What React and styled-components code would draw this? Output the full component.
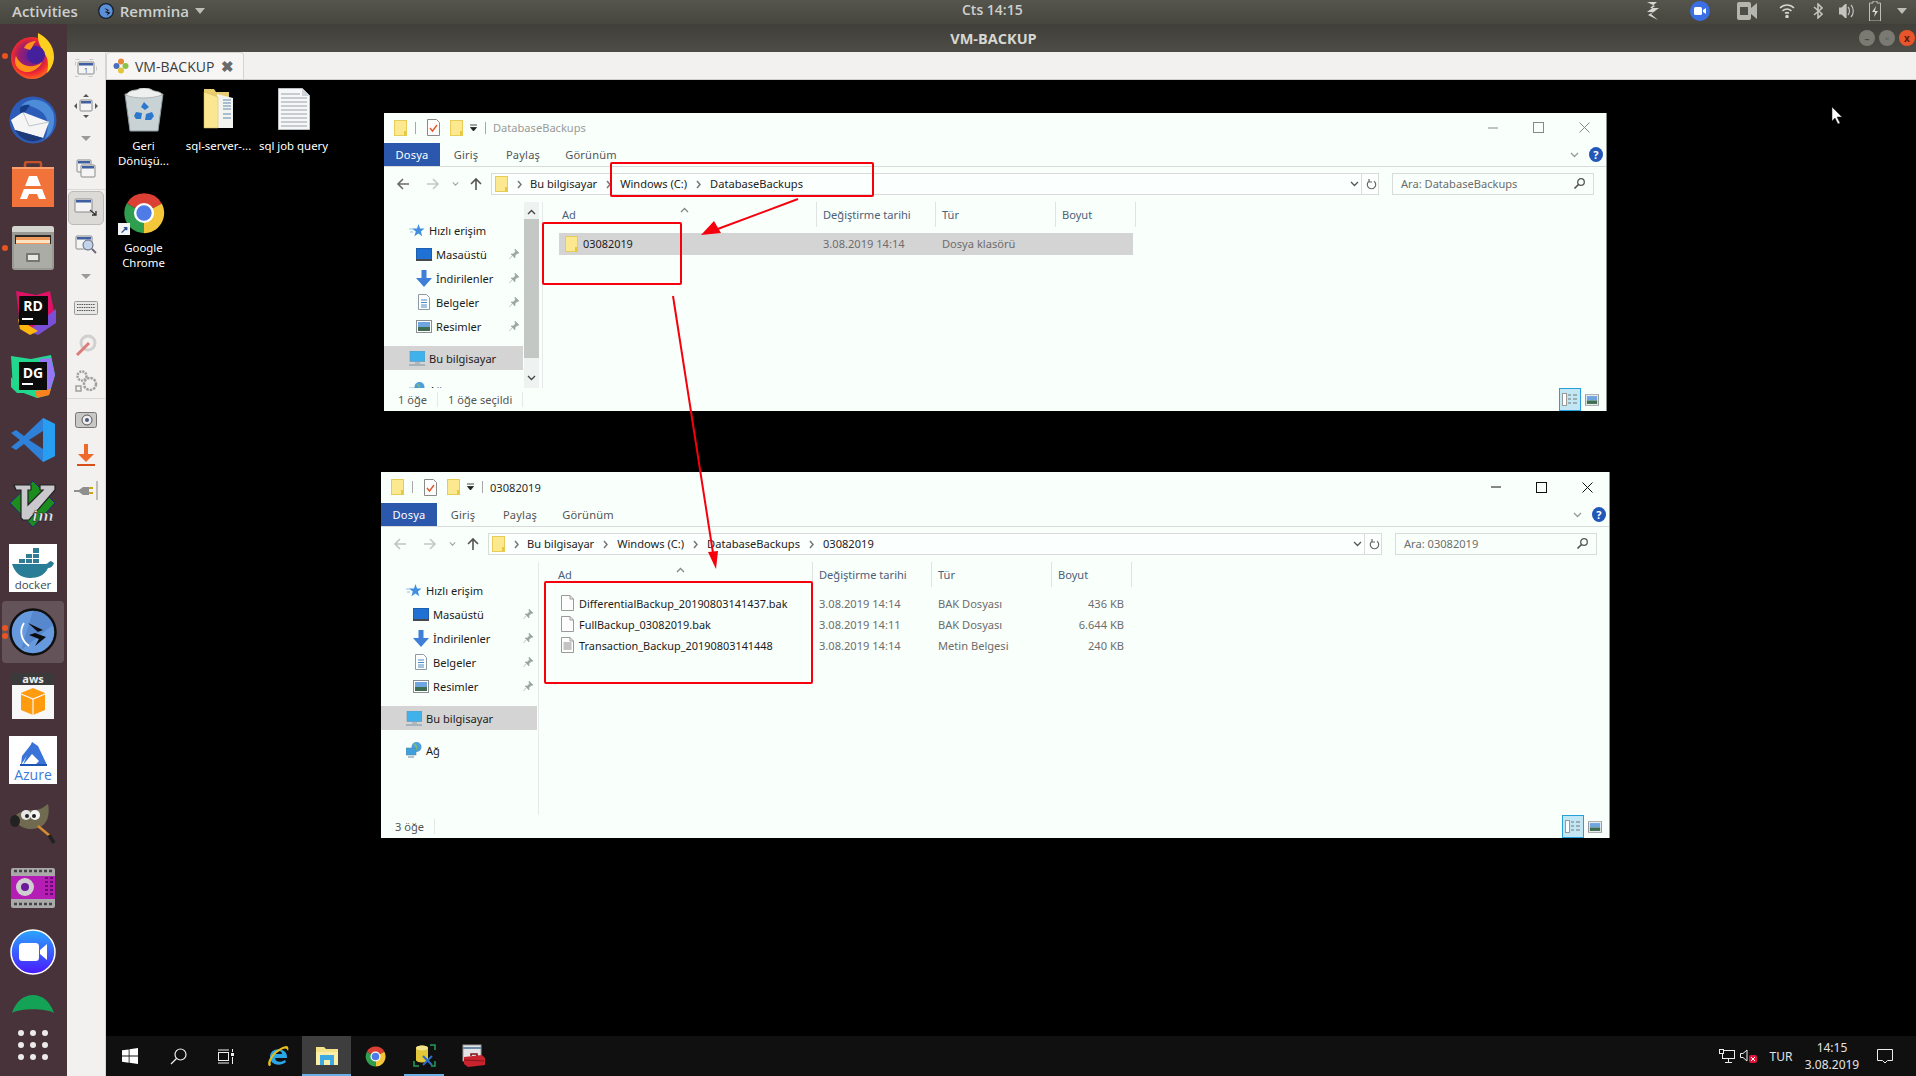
import React from 'react';
import styled, { createGlobalStyle } from 'styled-components';

const GlobalStyle = createGlobalStyle`
  html, body { margin: 0; padding: 0; background: #000; }
  * { box-sizing: border-box; }
`;

const Screen = styled.div`
  width: 1916px;
  height: 1076px;
  display: flex;
  flex-direction: column;
  overflow: hidden;
  background: #000;
  font-family: "Noto Sans", sans-serif;
`;

/* ubuntu shell */
const TopBar = styled.div`
  height: 24px;
  flex: none;
  display: flex;
  align-items: center;
  position: relative;
  padding: 0 0 2px 12px;
  background: linear-gradient(#56554d, #46453e);
  color: #ccd0cf;
  font-family: "Open Sans", sans-serif;
  font-size: 15px;
  font-weight: 600;
`;
const AppMenu = styled.div`
  display: flex;
  align-items: center;
  gap: 6px;
  margin-left: 20px;
`;
const Clock = styled.div`
  position: absolute;
  left: 962px;
  top: 0;
  font-size: 14px;
`;
const Tray = styled.div`
  margin-left: auto;
  display: flex;
  align-items: center;
  height: 24px;
`;
const TraySlot = styled.div`
  width: ${(p) => p.$w}px;
  display: flex;
  justify-content: center;
`;
const Caret = styled.span`
  width: 0;
  height: 0;
  border-left: 5px solid transparent;
  border-right: 5px solid transparent;
  border-top: 6px solid #bdbdb8;
`;

const Main = styled.div`
  flex: 1;
  display: flex;
  min-height: 0;
`;
const Dock = styled.div`
  width: 67px;
  flex: none;
  display: flex;
  flex-direction: column;
  align-items: center;
  background: #48333b;
  position: relative;
`;
const DockItem = styled.div`
  width: 100%;
  height: ${(p) => p.$h || 64}px;
  flex: none;
  display: flex;
  align-items: ${(p) => p.$align || 'center'};
  justify-content: center;
  position: relative;
  overflow: hidden;
  padding-top: ${(p) => p.$pt || 0}px;
  padding-right: 2px;
  padding-bottom: ${(p) => p.$pb || 0}px;
  svg { position: relative; }
`;
const ActiveTile = styled.div`
  position: absolute;
  left: 2px;
  right: 3px;
  top: 1px;
  bottom: 1px;
  border-radius: 4px;
  background: rgba(255, 255, 255, 0.16);
`;
const RunDot = styled.span`
  position: absolute;
  left: 2px;
  top: ${(p) => p.$top}px;
  width: 6px;
  height: 6px;
  border-radius: 50%;
  background: #e95420;
`;

const Remmina = styled.div`
  flex: 1;
  display: flex;
  flex-direction: column;
  min-width: 0;
`;
const TitleBar = styled.div`
  height: 28px;
  flex: none;
  display: flex;
  align-items: center;
  justify-content: center;
  position: relative;
  padding-left: 4px;
  background: linear-gradient(#403f39, #4d4c46);
  color: #d6d6d2;
  font-family: "Open Sans", sans-serif;
  font-size: 14.5px;
  font-weight: 700;
`;
const WinButtons = styled.div`
  position: absolute;
  right: 1px;
  top: 6px;
  display: flex;
  gap: 4px;
`;
const WinButton = styled.span`
  width: 16px;
  height: 16px;
  border-radius: 50%;
  display: flex;
  align-items: center;
  justify-content: center;
  background: ${(p) => (p.$close ? '#e9552b' : '#7a7972')};
  color: ${(p) => (p.$close ? '#5d1a08' : '#4a4942')};
  font-size: 10px;
  line-height: 1;
`;
const RemminaBody = styled.div`
  flex: 1;
  display: flex;
  min-height: 0;
`;
const Toolbar = styled.div`
  width: 39px;
  flex: none;
  display: flex;
  flex-direction: column;
  background: #f2f1f0;
  border-right: 1px solid #d8d6d3;
`;
const ToolItem = styled.div`
  height: ${(p) => p.$h}px;
  flex: none;
  display: flex;
  align-items: center;
  justify-content: center;
  ${(p) => p.$active && `
    margin: 1px 1px 0;
    background: #dcdad7;
    border: 1px solid #bdbbb7;
    border-radius: 5px;
  `}
  ${(p) => p.$line && `border-bottom: 1px solid #dcdad7;`}
`;
const ToolArrow = styled.span`
  width: 0;
  height: 0;
  border-left: 5px solid transparent;
  border-right: 5px solid transparent;
  border-top: 5px solid #9a9a98;
`;
const Session = styled.div`
  flex: 1;
  display: flex;
  flex-direction: column;
  min-width: 0;
`;
const TabBar = styled.div`
  height: 28px;
  flex: none;
  display: flex;
  align-items: flex-end;
  background: #f2f1f0;
  border-bottom: 1px solid #cfcdca;
`;
const Tab = styled.div`
  width: 138px;
  height: 27px;
  display: flex;
  align-items: center;
  gap: 6px;
  padding-left: 6px;
  background: #f7f6f5;
  border: 1px solid #d5d3d0;
  border-bottom: none;
  border-radius: 4px 4px 0 0;
  color: #3c3c3c;
  font-family: "Open Sans", sans-serif;
  font-size: 14px;
`;
const TabClose = styled.span`
  color: #6a6a6a;
  font-size: 15px;
  font-weight: 700;
  margin-left: 1px;
`;

/* remote windows desktop */
const Desktop = styled.div`
  flex: 1;
  position: relative;
  display: flex;
  flex-direction: column;
  background: #000;
  min-height: 0;
`;
const IconGrid = styled.div`
  display: grid;
  grid-template-columns: repeat(3, 75px);
  grid-auto-rows: 102px;
  padding-top: 8px;
`;
const DeskIcon = styled.div`
  display: flex;
  flex-direction: column;
  align-items: center;
  color: #fff;
  font-size: 11.4px;
  line-height: 15px;
  text-align: center;
`;
const DeskArt = styled.div`
  height: 50px;
  display: flex;
  align-items: flex-start;
  justify-content: center;
  position: relative;
`;
const Shortcut = styled.span`
  position: absolute;
  left: -3px;
  bottom: 5px;
  width: 12px;
  height: 12px;
  background: #f4f4f4;
  color: #23508f;
  font-size: 10px;
  line-height: 12px;
  font-weight: 700;
`;
const Taskbar = styled.div`
  height: 40px;
  flex: none;
  margin-top: auto;
  display: flex;
  align-items: stretch;
  background: #101010;
  color: #e4e4e4;
`;
const TaskBtn = styled.div`
  width: ${(p) => p.$w || 49}px;
  margin-left: ${(p) => p.$ml || 0}px;
  flex: none;
  display: flex;
  align-items: center;
  justify-content: center;
  position: relative;
  ${(p) => p.$on && `background: #3e3e3e;`}
  ${(p) => p.$bar && `
    &::after {
      content: '';
      position: absolute;
      bottom: 0;
      left: ${p.$bar === 'wide' ? 0 : 4}px;
      right: ${p.$bar === 'wide' ? 0 : 5}px;
      height: 2px;
      background: #6ab0e4;
    }
  `}
`;
const TaskTray = styled.div`
  margin-left: auto;
  display: flex;
  align-items: center;
  padding-right: 6px;
  font-family: "Noto Sans", sans-serif;
  font-size: 12px;
`;
const TrayCell = styled.div`
  width: ${(p) => p.$w}px;
  display: flex;
  justify-content: center;
  text-align: center;
  line-height: 17px;
`;

/* explorer window */
const Win = styled.div`
  position: absolute;
  left: ${(p) => p.$left}px;
  top: ${(p) => p.$top}px;
  width: ${(p) => p.$width}px;
  height: ${(p) => p.$height}px;
  display: flex;
  flex-direction: column;
  overflow: hidden;
  background: #f9fffb;
  border-right: 1px solid #8a8f8c;
  color: #1c1c1c;
  font-family: "Noto Sans", sans-serif;
  font-size: 11.1px;
`;
const WinTitle = styled.div`
  height: ${(p) => (p.$active ? 31 : 30)}px;
  flex: none;
  display: flex;
  align-items: center;
  padding-left: 10px;
  padding-bottom: 1px;
  color: ${(p) => (p.$active ? '#2a2a2a' : '#9a9a9a')};
`;
const QuickGap = styled.span`
  width: ${(p) => p.$w}px;
  flex: none;
`;
const Sep = styled.span`
  width: 1px;
  height: 12px;
  flex: none;
  background: #a8a8a8;
`;
const TitleText = styled.span`
  margin-left: 7px;
`;
const Controls = styled.div`
  margin-left: auto;
  display: flex;
  align-items: center;
  gap: 35px;
  padding-right: 16px;
  color: ${(p) => (p.$active ? '#111' : '#888')};
`;
const Ribbon = styled.div`
  height: 24px;
  flex: none;
  display: flex;
  align-items: center;
  border-bottom: 1px solid #d8dbd9;
  color: #555;
  letter-spacing: 0.2px;
`;
const FileTab = styled.div`
  width: 56px;
  height: 23px;
  display: flex;
  align-items: center;
  justify-content: center;
  background: #2b58ad;
  color: #fff;
`;
const RibbonTab = styled.div`
  width: ${(p) => p.$w}px;
  text-align: center;
`;
const RibbonRight = styled.div`
  margin-left: auto;
  display: flex;
  align-items: center;
  gap: 10px;
  padding-right: 3px;
`;
const Help = styled.span`
  width: 14px;
  height: 15px;
  border-radius: 50%;
  background: #2257b8;
  color: #fff;
  font-size: 11px;
  font-weight: 700;
  line-height: 15px;
  text-align: center;
`;
const AddressRow = styled.div`
  height: 22px;
  margin-top: 6px;
  flex: none;
  display: flex;
  align-items: center;
  padding-right: 12px;
`;
const NavArrows = styled.div`
  width: 107px;
  flex: none;
  display: flex;
  align-items: center;
  padding-left: 12px;
`;
const AddressBox = styled.div`
  flex: 1;
  height: 22px;
  min-width: 0;
  display: flex;
  align-items: center;
  padding-left: 3px;
  background: #fbfffd;
  border: 1px solid #d9dcda;
`;
const Crumb = styled.span`
  color: #222;
  padding-bottom: 1px;
`;
const CrumbSep = styled.span`
  width: ${(p) => p.$w || 23}px;
  flex: none;
  display: flex;
  justify-content: center;
`;
const AddressEnd = styled.div`
  margin-left: auto;
  height: 100%;
  display: flex;
  align-items: center;
`;
const RefreshCell = styled.span`
  width: 17px;
  height: 100%;
  display: flex;
  align-items: center;
  justify-content: center;
  margin-left: 2px;
  padding-left: 2px;
  border-left: 1px solid #d9dcda;
`;
const SearchBox = styled.div`
  width: 202px;
  height: 22px;
  margin-left: 13px;
  flex: none;
  display: flex;
  align-items: center;
  justify-content: space-between;
  padding: 0 7px 1px 8px;
  border: 1px solid #d9dcda;
  color: #6d6d6d;
`;
const WinBody = styled.div`
  flex: 1;
  margin-top: 7px;
  display: flex;
  min-height: 0;
`;
const NavPane = styled.div`
  width: ${(p) => p.$w}px;
  flex: none;
  padding-top: 16px;
  overflow: hidden;
`;
const NavRow = styled.div`
  height: 24px;
  display: flex;
  align-items: center;
  position: relative;
  padding-left: ${(p) => p.$pl}px;
  margin-top: ${(p) => p.$mt || 0}px;
  ${(p) => p.$sel && `background: #d4d4d4;`}
`;
const NavIcon = styled.span`
  width: 16px;
  height: 16px;
  flex: none;
  margin-right: 4px;
  display: flex;
  align-items: center;
  justify-content: center;
`;
const NavPin = styled.span`
  position: absolute;
  right: ${(p) => p.$r}px;
  top: 6px;
  display: flex;
`;
const Scroll = styled.div`
  width: 15px;
  margin-left: 1px;
  flex: none;
  display: flex;
  flex-direction: column;
  align-items: center;
  justify-content: space-between;
  background: linear-gradient(#eef2f0 0 17px, #c3c8c5 17px calc(100% - 30px), #eef2f0 calc(100% - 30px));
  padding: 7px 0;
`;
const Content = styled.div`
  flex: 1;
  min-width: 0;
  margin-left: ${(p) => p.$ml}px;
  border-left: 1px solid #e6eae8;
`;
const Columns = styled.div`
  height: 25px;
  display: grid;
  grid-template-columns: 274px 119px 120px 80px;
  position: relative;
  color: #4d6079;
`;
const ColHead = styled.div`
  display: flex;
  align-items: center;
  padding-left: ${(p) => p.$pl || 6}px;
  border-right: 1px solid #dfe3e1;
`;
const SortMark = styled.span`
  position: absolute;
  left: 137px;
  top: -1px;
`;
const Rows = styled.div`
  padding: 6px 0 0 16px;
`;
const FileRow = styled.div`
  width: 574px;
  height: ${(p) => (p.$sel ? 22 : 21)}px;
  display: grid;
  grid-template-columns: 258px 119px 120px 77px;
  align-items: center;
  padding-bottom: 1px;
  color: #6d6d6d;
  ${(p) => p.$sel && `background: #d4d4d4;`}
`;
const NameCell = styled.div`
  display: flex;
  align-items: center;
  gap: 5px;
  padding-left: 6px;
  color: #1c1c1c;
  font-size: 10.9px;
`;
const FileCell = styled.div`
  padding-left: 6px;
`;
const SizeCell = styled.div`
  text-align: right;
  padding-right: 5px;
`;
const StatusBar = styled.div`
  height: 23px;
  flex: none;
  display: flex;
  align-items: center;
  padding-left: 14px;
  color: #555;
`;
const StatusSep = styled.span`
  width: 1px;
  height: 15px;
  margin: 0 10px;
  background: #e4e8e6;
`;
const ViewBtns = styled.div`
  margin-left: auto;
  display: flex;
  align-items: center;
  gap: 4px;
  padding-right: 7px;
  height: 100%;
`;
const DetailsBtn = styled.span`
  width: 22px;
  height: 23px;
  display: flex;
  align-items: center;
  justify-content: center;
  background: #c2e6f4;
  border: 1px solid #26a0da;
`;

/* icons */
const Folder = () => (
  <svg width="13" height="16" viewBox="0 0 13 16">
    <rect x=".5" y=".5" width="12" height="15" fill="#fbe88f" stroke="#e7cd55" />
    <rect x="10" y="11" width="2.5" height="4.5" fill="#e7c93f" />
  </svg>
);
const CheckDoc = () => (
  <svg width="13" height="17" viewBox="0 0 13 17">
    <path d="M.5.5h9l3 3v13H.5z" fill="#fdfdfd" stroke="#8a8a8a" />
    <path d="M3 9l2.5 3L10 6" fill="none" stroke="#e3572a" strokeWidth="1.4" />
  </svg>
);
const Drop = () => (
  <svg width="9" height="8" viewBox="0 0 9 8">
    <path d="M1 1h7M1.5 3.5h6L4.5 7z" fill="#222" stroke="#222" strokeWidth=".8" />
  </svg>
);
const Chev = ({ c = '#777', s = 7 }) => (
  <svg width={s} height={s + 2} viewBox="0 0 7 9">
    <path d="M2 1l3 3.5L2 8" fill="none" stroke={c} strokeWidth="1.5" />
  </svg>
);
const VChev = ({ c = '#555', w = 9 }) => (
  <svg width={w} height="6" viewBox="0 0 9 6">
    <path d="M1 1l3.5 3.5L8 1" fill="none" stroke={c} strokeWidth="1.3" />
  </svg>
);
const UpChev = ({ c = '#444' }) => (
  <svg width="9" height="6" viewBox="0 0 9 6">
    <path d="M1 5l3.5-3.5L8 5" fill="none" stroke={c} strokeWidth="1.3" />
  </svg>
);
const BigArrow = ({ dir, c }) => (
  <svg width="14" height="14" viewBox="0 0 14 14">
    {dir === 'l' && <path d="M13 7H2M7 2L2 7l5 5" fill="none" stroke={c} strokeWidth="1.6" />}
    {dir === 'r' && <path d="M1 7h11M7 2l5 5-5 5" fill="none" stroke={c} strokeWidth="1.6" />}
    {dir === 'u' && <path d="M7 13V2M2 7l5-5 5 5" fill="none" stroke={c} strokeWidth="1.6" />}
  </svg>
);
const Refresh = () => (
  <svg width="11" height="13" viewBox="0 0 11 13">
    <path d="M3 3.2a4.2 4.2 0 1 0 5 0M3 1v3h3" fill="none" stroke="#666" strokeWidth="1.2" />
  </svg>
);
const Lens = () => (
  <svg width="13" height="13" viewBox="0 0 13 13">
    <circle cx="8" cy="5" r="3.3" fill="none" stroke="#555" strokeWidth="1.3" />
    <path d="M5.5 7.5L1.5 11.5" stroke="#555" strokeWidth="1.7" />
  </svg>
);
const Pin = () => (
  <svg width="11" height="12" viewBox="0 0 11 12">
    <path d="M6 1l4 4-2 .6-2 2 0 2.400-4-4 2.400 0 2-2z M3 8l-2.500 3" fill="#9aa5a3" stroke="#9aa5a3" strokeWidth=".6" />
  </svg>
);
const StarIcon = () => (
  <svg width="16" height="15" viewBox="0 0 16 15">
    <path d="M9.500 1l1.500 4.600h4.500l-3.600 2.800 1.300 4.800-3.800-2.800-4 2.800 1.400-4.800L3 5.600h5z" fill="#3f8ee0" />
    <path d="M0 6h4M1 9h3" stroke="#8dc0ef" />
  </svg>
);
const DesktopNav = () => (
  <svg width="16" height="13" viewBox="0 0 16 13">
    <rect x=".5" y=".5" width="15" height="11" fill="#1f72d4" stroke="#1b5fb0" />
    <rect x="0" y="11" width="16" height="2" fill="#45484d" />
  </svg>
);
const DownNav = () => (
  <svg width="16" height="17" viewBox="0 0 16 17">
    <path d="M5.500 0h5v8H16l-8 9-8-9h5.500z" fill="#3f7fd8" />
  </svg>
);
const DocNav = () => (
  <svg width="12" height="16" viewBox="0 0 12 16">
    <path d="M.5.5h8l3 3v12H.5z" fill="#fff" stroke="#8d9aa5" />
    <path d="M3 6h6M3 8.500h6M3 11h6M3 13h6" stroke="#4a8bc4" />
  </svg>
);
const PicNav = ({ w = 16, h = 13 }) => (
  <svg width={w} height={h} viewBox="0 0 16 13">
    <rect x=".5" y=".5" width="15" height="12" fill="#fff" stroke="#8a8f93" />
    <rect x="2" y="2" width="12" height="5" fill="#6fa6e0" />
    <path d="M2 7h12v4H2z" fill="#3e6d52" />
  </svg>
);
const PcNav = () => (
  <svg width="16" height="15" viewBox="0 0 16 15">
    <rect x="1" y="0" width="15" height="10.500" fill="#3fb2ec" stroke="#6a8fa8" strokeWidth=".6" />
    <path d="M6 11h5v2H6z" fill="#aeb9c0" />
    <path d="M0 14h16" stroke="#8fa1ad" strokeWidth="1.300" />
  </svg>
);
const NetNav = () => (
  <svg width="16" height="16" viewBox="0 0 16 16">
    <circle cx="10.500" cy="5" r="5" fill="#4d9ede" />
    <path d="M8 2c2 1 3 3 2 6" stroke="#7fc06a" fill="none" strokeWidth="1.500" />
    <rect x="0" y="6" width="10" height="7" fill="#3fa0dc" stroke="#5f86a3" strokeWidth=".6" />
    <path d="M2 15h6" stroke="#8fa1ad" strokeWidth="1.300" />
  </svg>
);
const Blank = ({ lines }) => (
  <svg width="13" height="16" viewBox="0 0 13 16">
    <path d="M.5.5h8.500l3.500 3.500v11.500H.5z" fill="#fdfdfd" stroke="#9a9a9a" />
    <path d="M9 .5V4h3.500" fill="none" stroke="#9a9a9a" />
    {lines && <path d="M2.500 6h8M2.500 8h8M2.500 10h8M2.500 12h8" stroke="#8a8a8a" />}
  </svg>
);
const Close = () => (
  <svg width="11" height="11" viewBox="0 0 11 11">
    <path d="M.5.5l10 10M10.500.5l-10 10" stroke="currentColor" />
  </svg>
);

/* windows app icons */
const ChromeIcon = ({ s }) => (
  <svg width={s} height={s} viewBox="0 0 48 48">
    <path d="M24 24L6 14A21 21 0 0 1 42.500 14z" fill="#dc4035" />
    <path d="M24 24L42.500 14A21 21 0 0 1 24 45z" fill="#f4c63a" />
    <path d="M24 24L24 45A21 21 0 0 1 6 14z" fill="#2f9e4e" />
    <circle cx="24" cy="24" r="10.500" fill="#fff" />
    <circle cx="24" cy="24" r="8" fill="#4f7be6" />
  </svg>
);
const RecycleBin = () => (
  <svg width="40" height="44" viewBox="0 0 40 44">
    <path d="M1 6l5 37h28l5-37z" fill="#c9d3d6" stroke="#8f9a9f" />
    <path d="M2 7c4-6 10-4 13-6s10-1 13 1 9 1 10 5c-10 4-28 4-36 0z" fill="#eef0f0" stroke="#b0b5b7" />
    <path d="M20 14l5 5-4 3-4-3zM12 24l6 1-1 6h-5l-2-3zM28 24l2 4-3 4h-6l1-6z" fill="#2c78cc" />
  </svg>
);
const FolderDocs = () => (
  <svg width="32" height="42" viewBox="0 0 32 42">
    <path d="M1 1h10l2 3h13v36H1z" fill="#e8cd70" />
    <path d="M14 6l16 4v30H14z" fill="#f3f3f0" />
    <path d="M20 12h8M20 15h8M20 18h8M20 21h8M20 26h8M20 30h8" stroke="#5e88ad" />
    <path d="M1 4l14 5v31L1 40z" fill="#fbe692" stroke="#d8b953" strokeWidth=".5" />
  </svg>
);
const TextDoc = () => (
  <svg width="32" height="42" viewBox="0 0 32 42">
    <path d="M.5.5h24l7 7v34H.5z" fill="#f6f7f7" stroke="#b9bec2" />
    <path d="M24 .5v7.500h7.500z" fill="#cfd4d8" />
    {[6, 10, 14, 18, 22, 26, 30, 34, 38].map((y) => (
      <path key={y} d={`M3 ${y}h${y < 9 ? 19 : 26}`} stroke="#9aa1a8" />
    ))}
  </svg>
);
const WinLogo = () => (
  <svg width="16" height="16" viewBox="0 0 16 16">
    <path d="M0 2.300l6.700-.9v6.200H0zM7.500 1.300L16 0v7.600H7.500zM0 8.400h6.700v6.300L0 13.800zM7.500 8.400H16V16l-8.500-1.200z" fill="#fff" />
  </svg>
);
const SearchTask = () => (
  <svg width="17" height="17" viewBox="0 0 17 17">
    <circle cx="10.500" cy="6.500" r="5.500" fill="none" stroke="#eee" strokeWidth="1.200" />
    <path d="M6.500 10.500L1 16" stroke="#eee" strokeWidth="1.300" />
  </svg>
);
const TaskView = () => (
  <svg width="16" height="15" viewBox="0 0 16 15">
    <rect x=".5" y="3.500" width="10" height="8" fill="none" stroke="#eee" />
    <path d="M0 1h11M0 14h11" stroke="#eee" />
    <rect x="13" y="4" width="3" height="3" fill="#eee" />
    <path d="M14.500 0v3M14.500 8v7" stroke="#eee" />
  </svg>
);
const IEIcon = () => (
  <svg width="24" height="24" viewBox="0 0 24 24">
    <path d="M21 14H9c0 4 6 5 10 2l1 2c-6 5-16 3-16-5C4 6 12 3 18 7c3 2 3 5 3 7zM9 10h7c0-4-6-4-7 0z" fill="#2ca7e6" />
    <path d="M3 22C-1 18 9 4 20 2c2-.4 3 2 2 5-1-3-3-3-5-2C10 8 3 16 5 21c-1 1-1.500 1-2 1z" fill="#e5be1d" />
  </svg>
);
const ExplorerIcon = () => (
  <svg width="22" height="18" viewBox="0 0 22 18">
    <path d="M0 0h8l2 2h12v16H0z" fill="#f4e28a" />
    <path d="M0 5h22v13H0z" fill="#fbeea9" />
    <path d="M4 8h14v10h-4v-5H8v5H4z" fill="#3ca9e2" />
  </svg>
);
const DbTool = () => (
  <svg width="24" height="24" viewBox="0 0 24 24">
    <path d="M3 4a6 2.500 0 0 1 12 0v12a6 2.500 0 0 1-12 0z" fill="#e3c73a" />
    <ellipse cx="9" cy="4" rx="6" ry="2.500" fill="#f3e48a" />
    <path d="M17 1h5v5M22 17v5h-4M6 22H1v-5" fill="none" stroke="#1f9e55" strokeWidth="1.500" />
    <path d="M10 12l9 9M19 12l-9 9" stroke="#2a6fc4" strokeWidth="2" />
  </svg>
);
const ToolBox = () => (
  <svg width="24" height="24" viewBox="0 0 24 24">
    <rect x="1" y="1" width="18" height="16" fill="#e4e4e4" stroke="#9a9a9a" />
    <path d="M1 4h18" stroke="#6d8aa8" strokeWidth="2" />
    <path d="M2 13l18-2 3 3v7L6 23l-4-3z" fill="#c8242e" />
    <path d="M9 12v-2h6v2" fill="none" stroke="#7c1218" strokeWidth="1.500" />
    <path d="M2 16l20 1" stroke="#86121a" />
  </svg>
);
const NetTray = () => (
  <svg width="16" height="14" viewBox="0 0 16 14">
    <rect x="3.500" y="1.500" width="12" height="8" fill="#101010" stroke="#eee" />
    <rect x=".5" y=".5" width="4" height="4" fill="#101010" stroke="#eee" />
    <path d="M9.500 10v3M6 13.500h7" stroke="#eee" />
  </svg>
);
const MuteTray = () => (
  <svg width="17" height="14" viewBox="0 0 17 14">
    <path d="M.5 4.500h2.500L7 1v11l-4-3.500H.5z" fill="none" stroke="#eee" />
    <rect x="9" y="6" width="8" height="8" rx="2" fill="#e0143c" />
    <path d="M11 8l4 4M15 8l-4 4" stroke="#fff" />
  </svg>
);
const Notify = () => (
  <svg width="16" height="15" viewBox="0 0 16 15">
    <path d="M.5.500h15v11h-5L8 14l-2.500-2.500h-5z" fill="none" stroke="#eee" />
  </svg>
);

/* dock icons */
const FirefoxIcon = () => (
  <svg width="46" height="46" viewBox="0 0 46 46">
    <defs>
      <radialGradient id="ffx" cx="0.45" cy="0.45" r="0.6">
        <stop offset="0" stopColor="#5b1f9c" />
        <stop offset=".45" stopColor="#9f1f6c" />
        <stop offset=".7" stopColor="#f0282f" />
        <stop offset="1" stopColor="#ff7a1e" />
      </radialGradient>
    </defs>
    <circle cx="22" cy="25" r="21" fill="url(#ffx)" />
    <path d="M28 0c8 4 16 12 16 24 0 6-3 12-7 16 2-8 1-16-3-20-2-5-7-10-6-20z" fill="#ffcf20" />
    <circle cx="26" cy="22" r="9" fill="#44209c" />
    <path d="M6 23c4 10 16 14 26 6-3 8-15 14-23 7C5 33 4 28 6 23z" fill="#ff9418" />
    <path d="M14 15c2-5 8-7 12-7-3 3-3 6-6 9-2-1-4-1-6-2z" fill="#ff9418" />
  </svg>
);
const ThunderbirdIcon = () => (
  <svg width="48" height="48" viewBox="0 0 48 48">
    <circle cx="24" cy="24" r="23.500" fill="#2c5cb8" />
    <path d="M12 10C20 0 38 2 44 16c3 10 0 22-8 27 4-10 4-20-2-26-6-5-14-9-22-7z" fill="#4d8cd9" />
    <path d="M2 24l12-8 26 10-6 16-28-8z" fill="#f5f5f5" />
    <path d="M14 16l6 14 20-4" fill="none" stroke="#bfc6cc" />
    <path d="M6 34l28 8c-8 6-20 5-28-8z" fill="#1c3a78" />
    <path d="M11 12c2-3 7-4 10-3l-5 7-5 1z" fill="#153d86" />
  </svg>
);
const SoftwareIcon = () => (
  <svg width="42" height="46" viewBox="0 0 42 46">
    <path d="M13 7V3q0-2 2-2h12q2 0 2 2v4" fill="none" stroke="#c5532a" strokeWidth="2.500" />
    <path d="M0 6h42v40H0z" fill="#f2733a" />
    <path d="M0 6h42v2H0z" fill="#f9a26f" />
    <path d="M17 15h8l9 23h-7l-2-5h-8l-2 5H8z" fill="#fff" />
    <path d="M12 25h18v3H12z" fill="#f2733a" />
  </svg>
);
const FilesIcon = () => (
  <svg width="42" height="44" viewBox="0 0 42 44">
    <rect width="42" height="44" rx="3" fill="#9a9a95" />
    <path d="M0 3q0-3 3-3h36q3 0 3 3v3H0z" fill="#d4d4cf" />
    <rect x="3" y="9" width="36" height="9" fill="#2a2826" />
    <rect x="4" y="11" width="34" height="7" fill="#f1995a" />
    <rect x="4" y="14" width="34" height="3" fill="#fbe3c2" />
    <rect x="2" y="18" width="38" height="24" fill="#acaca7" />
    <rect x="14" y="27" width="14" height="9" rx="1" fill="#77776f" />
    <rect x="16" y="29" width="10" height="5" fill="#e7e7e3" />
  </svg>
);
const RiderIcon = () => (
  <svg width="46" height="46" viewBox="0 0 46 46">
    <path d="M6 2l20 4 14-4 6 30-20 12L10 36z" fill="#dd1265" />
    <path d="M46 20v14l-18 12-10-4z" fill="#7a4fd8" />
    <path d="M8 30l20 12-8 4-10-6z" fill="#fdb60d" />
    <rect x="9" y="7" width="29" height="29" fill="#0b0b0b" />
    <text x="23" y="22" textAnchor="middle" fontFamily="Open Sans" fontWeight="700" fontSize="14" fill="#fff">RD</text>
    <rect x="12" y="29" width="11" height="2" fill="#fff" />
  </svg>
);
const DataGripIcon = () => (
  <svg width="46" height="46" viewBox="0 0 46 46">
    <path d="M1 3l20 3 20-4 4 20-6 20-12 3-24-9z" fill="#22d88f" />
    <path d="M30 6l11-1 4 17-6 18-9-6z" fill="#9775f8" />
    <path d="M1 24l14 16-8 0-6-6z" fill="#21d789" />
    <path d="M25 38l16-2-2 6-12 3z" fill="#fc801d" />
    <rect x="9" y="9" width="28" height="28" fill="#0b0b0b" />
    <text x="23" y="25" textAnchor="middle" fontFamily="Open Sans" fontWeight="700" fontSize="14" fill="#fff">DG</text>
    <rect x="12" y="30" width="11" height="2" fill="#fff" />
  </svg>
);
const VsCodeIcon = () => (
  <svg width="44" height="44" viewBox="0 0 44 44">
    <path d="M32 0l12 6v32l-12 6L13 26l-8 6-5-3 9-7-9-7 5-3 8 6z" fill="#2f80d8" />
    <path d="M32 0l12 6v32l-12 6z" fill="#279ef2" />
    <path d="M32 13L18 22l14 9z" fill="#48333b" />
  </svg>
);
const VimIcon = () => (
  <svg width="46" height="48" viewBox="0 0 46 48">
    <path d="M23 1l22 22-22 24L0 23z" fill="#1b8c1e" stroke="#222a78" strokeWidth="1" />
    <path d="M4 5h17v5h-3v15L33 10h-3V5h15v5L19 40h-6l-2-2V10H6z" fill="#c9c9cd" stroke="#222" strokeWidth="1.200" />
    <text x="33" y="41" textAnchor="middle" fontFamily="DejaVu Serif" fontStyle="italic" fontWeight="700" fontSize="15" fill="#e8e8e8" stroke="#111" strokeWidth=".5">im</text>
  </svg>
);
const DockerIcon = () => (
  <svg width="48" height="48" viewBox="0 0 48 48">
    <rect width="48" height="48" fill="#fff" />
    <path d="M3 20h34c2 0 3-3 5-3l3 2c-1 3-3 5-6 5-3 7-10 10-18 10-9 0-15-5-18-14z" fill="#2a7d96" />
    <path d="M10 15h6v4h-6zM17 15h6v4h-6zM24 15h6v4h-6zM17 10h6v4h-6zM24 10h6v4h-6zM24 4h6v5h-6z" fill="#347b96" />
    <text x="24" y="45" textAnchor="middle" fontFamily="Open Sans" fontSize="11.500" fill="#3d4a55">docker</text>
  </svg>
);
const RemminaBig = () => (
  <svg width="48" height="48" viewBox="0 0 48 48">
    <circle cx="24" cy="24" r="22.500" fill="#6699dd" stroke="#101010" strokeWidth="2.500" />
    <path d="M24 3a21 21 0 0 1 20 14L12 42z" fill="#4a78bd" opacity=".55" />
    <path d="M15 15c-5 8-3 17 5 23" fill="none" stroke="#fff" strokeWidth="1.800" />
    <path d="M19 15l15 7-8 3 11 4-11 9 4-7-10-4 9-3z" fill="#0d0d10" />
  </svg>
);
const RemminaSmall = () => (
  <svg width="16" height="16" viewBox="0 0 48 48">
    <circle cx="24" cy="24" r="22" fill="#5b8fd8" stroke="#15212f" strokeWidth="4" />
    <path d="M19 15l15 7-8 3 11 4-11 9 4-7-10-4 9-3z" fill="#0d0d10" />
  </svg>
);
const AwsIcon = () => (
  <svg width="42" height="46" viewBox="0 0 42 46">
    <rect width="42" height="46" fill="#f7f7f7" />
    <rect width="42" height="12" fill="#3a3a3a" />
    <text x="21" y="10" textAnchor="middle" fontFamily="Open Sans" fontWeight="700" fontSize="11" fill="#eee">aws</text>
    <path d="M21 15l12 5v17l-12 5-12-5V20z" fill="#ff9b0f" />
    <path d="M9 21l12 5 12-5M21 26v16" fill="none" stroke="#f7f7f7" strokeWidth="1.200" />
  </svg>
);
const AzureIcon = () => (
  <svg width="48" height="48" viewBox="0 0 48 48">
    <rect width="48" height="48" fill="#fff" />
    <path d="M23 6l6 4 9 19H26l4-4-7-7-9 11zM24 6l-5 4" fill="#3a74d8" />
    <path d="M13 20L24 6l-5 12-7 11z" fill="#3a74d8" />
    <path d="M11 29h27" stroke="#1c56b2" strokeWidth="2" />
    <text x="24" y="44" textAnchor="middle" fontFamily="Open Sans" fontSize="14" fill="#3a7bd8">Azure</text>
  </svg>
);
const GimpIcon = () => (
  <svg width="46" height="40" viewBox="0 0 46 40">
    <path d="M3 14C8 8 14 6 24 6c6 0 10-3 14-6 2 8 0 18-6 22-8 5-20 4-26-4z" fill="#6f6a50" />
    <ellipse cx="5" cy="17" rx="5" ry="6" fill="#222" />
    <circle cx="16" cy="11" r="5" fill="#e6e6e6" />
    <circle cx="25" cy="11" r="5" fill="#f4f4f4" />
    <circle cx="17" cy="12" r="2" fill="#222" />
    <circle cx="24" cy="12" r="2" fill="#222" />
    <path d="M28 22l12 10" stroke="#d58b30" strokeWidth="2.500" />
    <path d="M39 31l5 8" stroke="#222" strokeWidth="3.500" />
  </svg>
);
const VideoIcon = () => (
  <svg width="44" height="40" viewBox="0 0 44 40">
    <rect width="44" height="40" rx="2" fill="#a9a9a9" />
    <rect y="8" width="44" height="23" fill="#b41eb4" />
    <path d="M3 3h39M3 36h39" stroke="#444" strokeWidth="2.500" strokeDasharray="3 2" />
    <circle cx="14" cy="19" r="9" fill="#cfcfcf" />
    <circle cx="14" cy="19" r="4" fill="#6c1a9c" />
    <path d="M34 10h3M39 10h3M34 14h3M39 14h3M34 18h3M39 18h3M34 22h3M39 22h3M34 26h3M39 26h3" stroke="#6d0a6d" strokeWidth="2" />
  </svg>
);
const ZoomBig = () => (
  <svg width="46" height="46" viewBox="0 0 46 46">
    <defs>
      <linearGradient id="zm" x1="0" y1="0" x2="0" y2="1">
        <stop offset="0" stopColor="#2aa6ff" />
        <stop offset="1" stopColor="#4a18ff" />
      </linearGradient>
    </defs>
    <circle cx="23" cy="23" r="22" fill="url(#zm)" stroke="#fff" strokeWidth="1.500" />
    <rect x="9" y="14" width="20" height="18" rx="3.500" fill="#fff" />
    <path d="M30 21l7-6v16l-7-6z" fill="#fff" />
  </svg>
);
const GreenArc = () => (
  <svg width="42" height="20" viewBox="0 0 42 20">
    <path d="M0 18C4 6 12 0 21 0s17 6 21 18c-8-5-34-5-42 0z" fill="#14a356" />
  </svg>
);
const AppGrid = () => (
  <svg width="30" height="30" viewBox="0 0 30 30" fill="#ecebea">
    {[3, 15, 27].map((y) =>
      [3, 15, 27].map((x) => <circle key={`${x}-${y}`} cx={x} cy={y} r="3" />)
    )}
  </svg>
);

/* remmina toolbar icons */
const MiniWin = ({ x = 4, y = 4, w = 16, h = 12 }) => (
  <g>
    <rect x={x} y={y} width={w} height={h} rx="1" fill="#f4f4f4" stroke="#8a8a8a" />
    <rect x={x + 1} y={y + 1} width={w - 2} height="2.500" fill="#3f5fa0" />
  </g>
);
const ToolIcon = ({ children, w = 24, h = 24 }) => (
  <svg width={w} height={h} viewBox={`0 0 ${w} ${h}`}>{children}</svg>
);

/* top bar tray */
const ZGlyph = () => (
  <svg width="14" height="18" viewBox="0 0 14 18">
    <path d="M1 0h10L4 6h9L5 12l7 6-10-5 5-3H1l8-6z" fill="#d6d6d2" />
  </svg>
);
const ZoomTray = () => (
  <svg width="20" height="20" viewBox="0 0 20 20">
    <circle cx="10" cy="10" r="10" fill="#3b6fe6" />
    <rect x="4" y="6" width="8" height="8" rx="1.500" fill="#fff" />
    <path d="M13 9l3-2v6l-3-2z" fill="#fff" />
  </svg>
);
const CamTray = () => (
  <svg width="20" height="18" viewBox="0 0 20 18">
    <rect y="0" width="14" height="18" rx="2" fill="#b5b5b0" />
    <rect x="3" y="5" width="8" height="8" fill="#4e4d46" />
    <path d="M14 6l6-5v16l-6-5z" fill="#b5b5b0" />
  </svg>
);
const WifiTray = () => (
  <svg width="16" height="14" viewBox="0 0 16 14" fill="none" stroke="#d6d6d2" strokeWidth="1.500">
    <path d="M1 4c4-4 10-4 14 0M3.500 6.800c3-2.500 6-2.500 9 0M6 9.400c1.300-1 2.700-1 4 0" />
    <circle cx="8" cy="12.500" r="1" fill="#d6d6d2" />
  </svg>
);
const BtTray = () => (
  <svg width="10" height="16" viewBox="0 0 10 16" fill="none" stroke="#c4c4bf" strokeWidth="1.600">
    <path d="M1 4l8 7-4 4V1l4 4-8 7" />
  </svg>
);
const VolTray = () => (
  <svg width="16" height="14" viewBox="0 0 16 14" fill="none" stroke="#c4c4bf" strokeWidth="1.200">
    <path d="M0 4h3l4-4v14l-4-4H0z" fill="#c4c4bf" />
    <path d="M9 3c2 2 2 6 0 8M12 1c3 3 3 9 0 12" />
  </svg>
);
const BatTray = () => (
  <svg width="12" height="20" viewBox="0 0 12 20">
    <path d="M4 0h4v2h3.500v18H.5V2H4z" fill="none" stroke="#bdbdb8" />
    <path d="M7 5L3 11h3l-1 5 4-6H6z" fill="#d6d6d2" />
  </svg>
);

const pins = [
  { name: 'Masaüstü', icon: <DesktopNav /> },
  { name: 'İndirilenler', icon: <DownNav /> },
  { name: 'Belgeler', icon: <DocNav /> },
  { name: 'Resimler', icon: <PicNav /> },
];

const Explorer = ({
  left, top, width, height, title, active, crumbs, search, navWidth, pinRight,
  scroll, contentGap, rows, status,
}) => (
  <Win $left={left} $top={top} $width={width} $height={height}>
    <WinTitle $active={active}>
      <Folder />
      <QuickGap $w={8} />
      <Sep />
      <QuickGap $w={11} />
      <CheckDoc />
      <QuickGap $w={10} />
      <Folder />
      <QuickGap $w={6} />
      <Drop />
      <QuickGap $w={7} />
      <Sep />
      <TitleText>{title}</TitleText>
      <Controls $active={active}>
        <svg width="10" height="2" viewBox="0 0 10 2"><path d="M0 1h10" stroke="currentColor" /></svg>
        <svg width="11" height="11" viewBox="0 0 11 11"><rect x=".5" y=".5" width="10" height="10" fill="none" stroke="currentColor" /></svg>
        <Close />
      </Controls>
    </WinTitle>
    <Ribbon>
      <FileTab>Dosya</FileTab>
      <RibbonTab $w={52}>Giriş</RibbonTab>
      <RibbonTab $w={62}>Paylaş</RibbonTab>
      <RibbonTab $w={74}>Görünüm</RibbonTab>
      <RibbonRight>
        <VChev c="#999" />
        <Help>?</Help>
      </RibbonRight>
    </Ribbon>
    <AddressRow>
      <NavArrows>
        <BigArrow dir="l" c={active ? '#bfc4c2' : '#6b6b6b'} />
        <QuickGap $w={16} />
        <BigArrow dir="r" c="#c4c8c6" />
        <QuickGap $w={12} />
        <VChev c="#a0a4a2" w={7} />
        <QuickGap $w={10} />
        <BigArrow dir="u" c="#555" />
      </NavArrows>
      <AddressBox>
        <Folder />
        <CrumbSep $w={22}><Chev /></CrumbSep>
        {crumbs.map((c, i) => (
          <React.Fragment key={c}>
            {i > 0 && <CrumbSep><Chev /></CrumbSep>}
            <Crumb>{c}</Crumb>
          </React.Fragment>
        ))}
        <AddressEnd>
          <VChev />
          <RefreshCell><Refresh /></RefreshCell>
        </AddressEnd>
      </AddressBox>
      <SearchBox>
        {search}
        <Lens />
      </SearchBox>
    </AddressRow>
    <WinBody>
      <NavPane $w={navWidth}>
        <NavRow $pl={25}>
          <NavIcon><StarIcon /></NavIcon>Hızlı erişim
        </NavRow>
        {pins.map((p) => (
          <NavRow key={p.name} $pl={32}>
            <NavIcon>{p.icon}</NavIcon>{p.name}
            <NavPin $r={pinRight}><Pin /></NavPin>
          </NavRow>
        ))}
        <NavRow $pl={25} $mt={8} $sel>
          <NavIcon><PcNav /></NavIcon>Bu bilgisayar
        </NavRow>
        <NavRow $pl={25} $mt={8}>
          <NavIcon><NetNav /></NavIcon>Ağ
        </NavRow>
      </NavPane>
      {scroll && (
        <Scroll>
          <UpChev />
          <VChev c="#444" />
        </Scroll>
      )}
      <Content $ml={contentGap}>
        <Columns>
          <ColHead $pl={19}>Ad</ColHead>
          <ColHead>Değiştirme tarihi</ColHead>
          <ColHead>Tür</ColHead>
          <ColHead>Boyut</ColHead>
          <SortMark><UpChev c="#888" /></SortMark>
        </Columns>
        <Rows>
          {rows.map((r) => (
            <FileRow key={r.name} $sel={r.sel}>
              <NameCell>{r.icon}{r.name}</NameCell>
              <FileCell>{r.date}</FileCell>
              <FileCell>{r.kind}</FileCell>
              <SizeCell>{r.size}</SizeCell>
            </FileRow>
          ))}
        </Rows>
      </Content>
    </WinBody>
    <StatusBar>
      {status[0]}
      <StatusSep />
      {status[1]}
      {status[1] && <StatusSep />}
      <ViewBtns>
        <DetailsBtn>
          <svg width="16" height="13" viewBox="0 0 16 13">
            <rect x=".5" y=".5" width="4" height="12" fill="#fff" stroke="#999" />
            <path d="M6 2h3M11 2h4M6 6h3M11 6h4M6 10h3M11 10h4" stroke="#777" />
          </svg>
        </DetailsBtn>
        <PicNav w={14} h={12} />
      </ViewBtns>
    </StatusBar>
  </Win>
);

const Annotations = styled.svg`
  position: absolute;
  left: 0;
  top: 0;
  pointer-events: none;
`;

const filesTop = [
  { name: '03082019', date: '3.08.2019 14:14', kind: 'Dosya klasörü', size: '', sel: true, icon: <Folder /> },
];
const filesBottom = [
  { name: 'DifferentialBackup_20190803141437.bak', date: '3.08.2019 14:14', kind: 'BAK Dosyası', size: '436 KB', icon: <Blank /> },
  { name: 'FullBackup_03082019.bak', date: '3.08.2019 14:11', kind: 'BAK Dosyası', size: '6.644 KB', icon: <Blank /> },
  { name: 'Transaction_Backup_20190803141448', date: '3.08.2019 14:14', kind: 'Metin Belgesi', size: '240 KB', icon: <Blank lines /> },
];

const App = () => (
  <Screen>
    <GlobalStyle />
    <TopBar>
      Activities
      <AppMenu>
        <RemminaSmall />
        Remmina
        <Caret />
      </AppMenu>
      <Clock>Cts 14:15</Clock>
      <Tray>
        <TraySlot $w={46}><ZGlyph /></TraySlot>
        <TraySlot $w={47}><ZoomTray /></TraySlot>
        <TraySlot $w={47}><CamTray /></TraySlot>
        <TraySlot $w={34}><WifiTray /></TraySlot>
        <TraySlot $w={28}><BtTray /></TraySlot>
        <TraySlot $w={29}><VolTray /></TraySlot>
        <TraySlot $w={27}><BatTray /></TraySlot>
        <TraySlot $w={28}><Caret /></TraySlot>
      </Tray>
    </TopBar>
    <Main>
      <Dock>
        <DockItem><RunDot $top={29} /><FirefoxIcon /></DockItem>
        <DockItem><ThunderbirdIcon /></DockItem>
        <DockItem><SoftwareIcon /></DockItem>
        <DockItem><RunDot $top={29} /><FilesIcon /></DockItem>
        <DockItem><RiderIcon /></DockItem>
        <DockItem><DataGripIcon /></DockItem>
        <DockItem><VsCodeIcon /></DockItem>
        <DockItem><VimIcon /></DockItem>
        <DockItem><DockerIcon /></DockItem>
        <DockItem>
          <ActiveTile />
          <RunDot $top={25} />
          <RunDot $top={33} />
          <RemminaBig />
        </DockItem>
        <DockItem><AwsIcon /></DockItem>
        <DockItem><AzureIcon /></DockItem>
        <DockItem><GimpIcon /></DockItem>
        <DockItem><VideoIcon /></DockItem>
        <DockItem><ZoomBig /></DockItem>
        <DockItem $h={40} $align="flex-start" $pt={11}><GreenArc /></DockItem>
        <DockItem $h={52} $pb={10}><AppGrid /></DockItem>
      </Dock>
      <Remmina>
        <TitleBar>
          VM-BACKUP
          <WinButtons>
            <WinButton>–</WinButton>
            <WinButton>▫</WinButton>
            <WinButton $close>x</WinButton>
          </WinButtons>
        </TitleBar>
        <RemminaBody>
          <Toolbar>
            <ToolItem $h={32}>
              <ToolIcon w={22} h={18}>
                <rect x=".5" y=".5" width="21" height="17" fill="none" stroke="#c9c9c7" strokeDasharray="4 10" />
                <MiniWin x={3} y={3} w={16} h={12} />
                <text x="11" y="14" fontSize="7" textAnchor="middle" fill="#444" fontFamily="Open Sans">1</text>
              </ToolIcon>
            </ToolItem>
            <ToolItem $h={44}>
              <ToolIcon w={24} h={24}>
                <MiniWin x={6} y={6} w={12} h={11} />
                <path d="M12 0l3 3H9zM12 24l3-3H9zM0 12l3-3v6zM24 12l-3-3v6z" fill="#555" />
              </ToolIcon>
            </ToolItem>
            <ToolItem $h={20}><ToolArrow /></ToolItem>
            <ToolItem $h={42} $line>
              <ToolIcon w={20} h={20}>
                <MiniWin x={1} y={1} w={14} h={12} />
                <MiniWin x={5} y={6} w={14} h={12} />
              </ToolIcon>
            </ToolItem>
            <ToolItem $h={34} $active>
              <ToolIcon w={24} h={20}>
                <MiniWin x={1} y={1} w={17} h={13} />
                <path d="M16 12l6 5M22 13v4h-4" fill="none" stroke="#333" strokeWidth="1.300" />
              </ToolIcon>
            </ToolItem>
            <ToolItem $h={40}>
              <ToolIcon w={22} h={20}>
                <MiniWin x={1} y={1} w={16} h={13} />
                <circle cx="13" cy="10" r="5" fill="#c2d4ec" stroke="#667" />
                <path d="M17 14l4 4" stroke="#667" strokeWidth="1.800" />
              </ToolIcon>
            </ToolItem>
            <ToolItem $h={22}><ToolArrow /></ToolItem>
            <ToolItem $h={42}>
              <ToolIcon w={24} h={14}>
                <rect x=".5" y=".5" width="23" height="13" rx="1" fill="#e8e8e6" stroke="#999" />
                <path d="M3 3.500h18M3 6.500h18M3 9.500h18" stroke="#555" strokeDasharray="1.500 .8" />
              </ToolIcon>
            </ToolItem>
            <ToolItem $h={34}>
              <ToolIcon w={24} h={24}>
                <circle cx="14" cy="9" r="7" fill="none" stroke="#d0d0ce" strokeWidth="3" />
                <path d="M3 21L15 9" stroke="#dd7a7a" strokeWidth="3" />
              </ToolIcon>
            </ToolItem>
            <ToolItem $h={36} $line>
              <ToolIcon w={24} h={24}>
                <circle cx="8" cy="7" r="4.500" fill="none" stroke="#a0a09e" strokeWidth="2.500" strokeDasharray="2 1" />
                <circle cx="16" cy="15" r="6" fill="none" stroke="#a0a09e" strokeWidth="2.500" strokeDasharray="2.500 1" />
                <rect x="2" y="17" width="5" height="5" fill="none" stroke="#a0a09e" strokeWidth="1.500" />
              </ToolIcon>
            </ToolItem>
            <ToolItem $h={40}>
              <ToolIcon w={22} h={18}>
                <rect x=".5" y="2.500" width="21" height="15" rx="2" fill="#c8c8c6" stroke="#777" />
                <circle cx="12" cy="10" r="5" fill="#eee" stroke="#555" />
                <circle cx="12" cy="10" r="2" fill="#4a5a7a" />
              </ToolIcon>
            </ToolItem>
            <ToolItem $h={32}>
              <ToolIcon w={18} h={22}>
                <path d="M7 0h4v10h6l-8 8-8-8h6z" fill="#ee6a2a" />
                <path d="M0 20h18v2H0z" fill="#d94f1a" />
              </ToolIcon>
            </ToolItem>
            <ToolItem $h={40}>
              <ToolIcon w={24} h={22}>
                <path d="M0 10h5l4-3h6v8H9l-4-3H0z" fill="#8f8f8d" />
                <path d="M15 8h4M15 13h4" stroke="#c9a616" strokeWidth="2" />
                <path d="M23 1v19" stroke="#aaa" strokeWidth="1.500" />
              </ToolIcon>
            </ToolItem>
          </Toolbar>
          <Session>
            <TabBar>
              <Tab>
                <svg width="16" height="16" viewBox="0 0 16 16">
                  <circle cx="8" cy="3.500" r="3" fill="#e8893a" />
                  <circle cx="3.500" cy="8" r="3" fill="#4d6fb8" />
                  <circle cx="12.500" cy="8" r="3" fill="#8cc24a" />
                  <circle cx="8" cy="12.500" r="3" fill="#e2c53a" />
                </svg>
                VM-BACKUP
                <TabClose>✖</TabClose>
              </Tab>
            </TabBar>
            <Desktop>
              <IconGrid>
                <DeskIcon>
                  <DeskArt><RecycleBin /></DeskArt>
                  Geri<br />Dönüşü...
                </DeskIcon>
                <DeskIcon>
                  <DeskArt><FolderDocs /></DeskArt>
                  sql-server-...
                </DeskIcon>
                <DeskIcon>
                  <DeskArt><TextDoc /></DeskArt>
                  sql job query
                </DeskIcon>
                <DeskIcon>
                  <DeskArt><ChromeIcon s={46} /><Shortcut>↗</Shortcut></DeskArt>
                  Google<br />Chrome
                </DeskIcon>
              </IconGrid>
              <Explorer
                left={278} top={33} width={1223} height={298}
                title="DatabaseBackups" active={false}
                crumbs={['Bu bilgisayar', 'Windows (C:)', 'DatabaseBackups']}
                search="Ara: DatabaseBackups"
                navWidth={139} pinRight={3} scroll contentGap={3}
                rows={filesTop}
                status={['1 öğe', '1 öğe seçildi']}
              />
              <Explorer
                left={275} top={392} width={1229} height={366}
                title="03082019" active
                crumbs={['Bu bilgisayar', 'Windows (C:)', 'DatabaseBackups', '03082019']}
                search="Ara: 03082019"
                navWidth={156} pinRight={3} contentGap={1}
                rows={filesBottom}
                status={['3 öğe']}
              />
              <Annotations width="1810" height="996" viewBox="106 80 1810 996">
                <g fill="none" stroke="#f5000c" strokeWidth="2">
                  <rect x="611" y="163" width="262" height="33" rx="1" />
                  <rect x="543" y="223" width="138" height="61" rx="1" />
                  <rect x="545" y="582" width="267" height="101" rx="1" />
                  <path d="M798 199L715 230" />
                  <path d="M673 296L713 553" />
                </g>
                <path d="M701 235L714 221L721 233z" fill="#f5000c" />
                <path d="M716 569L708 552L718 551z" fill="#f5000c" />
                <path d="M1832 107v14l3-3 3 6 2-1-3-6h5z" fill="#fff" stroke="#222" strokeWidth=".5" />
              </Annotations>
              <Taskbar>
                <TaskBtn $w={48}><WinLogo /></TaskBtn>
                <TaskBtn $w={48}><SearchTask /></TaskBtn>
                <TaskBtn $w={48}><TaskView /></TaskBtn>
                <TaskBtn $ml={3}><IEIcon /></TaskBtn>
                <TaskBtn $on $bar="wide"><ExplorerIcon /></TaskBtn>
                <TaskBtn><ChromeIcon s={23} /></TaskBtn>
                <TaskBtn $bar="narrow"><DbTool /></TaskBtn>
                <TaskBtn><ToolBox /></TaskBtn>
                <TaskTray>
                  <TrayCell $w={22}><NetTray /></TrayCell>
                  <TrayCell $w={20}><MuteTray /></TrayCell>
                  <TrayCell $w={46}>TUR</TrayCell>
                  <TrayCell $w={56}>14:15<br />3.08.2019</TrayCell>
                  <TrayCell $w={50}><Notify /></TrayCell>
                </TaskTray>
              </Taskbar>
            </Desktop>
          </Session>
        </RemminaBody>
      </Remmina>
    </Main>
  </Screen>
);

export default App;
